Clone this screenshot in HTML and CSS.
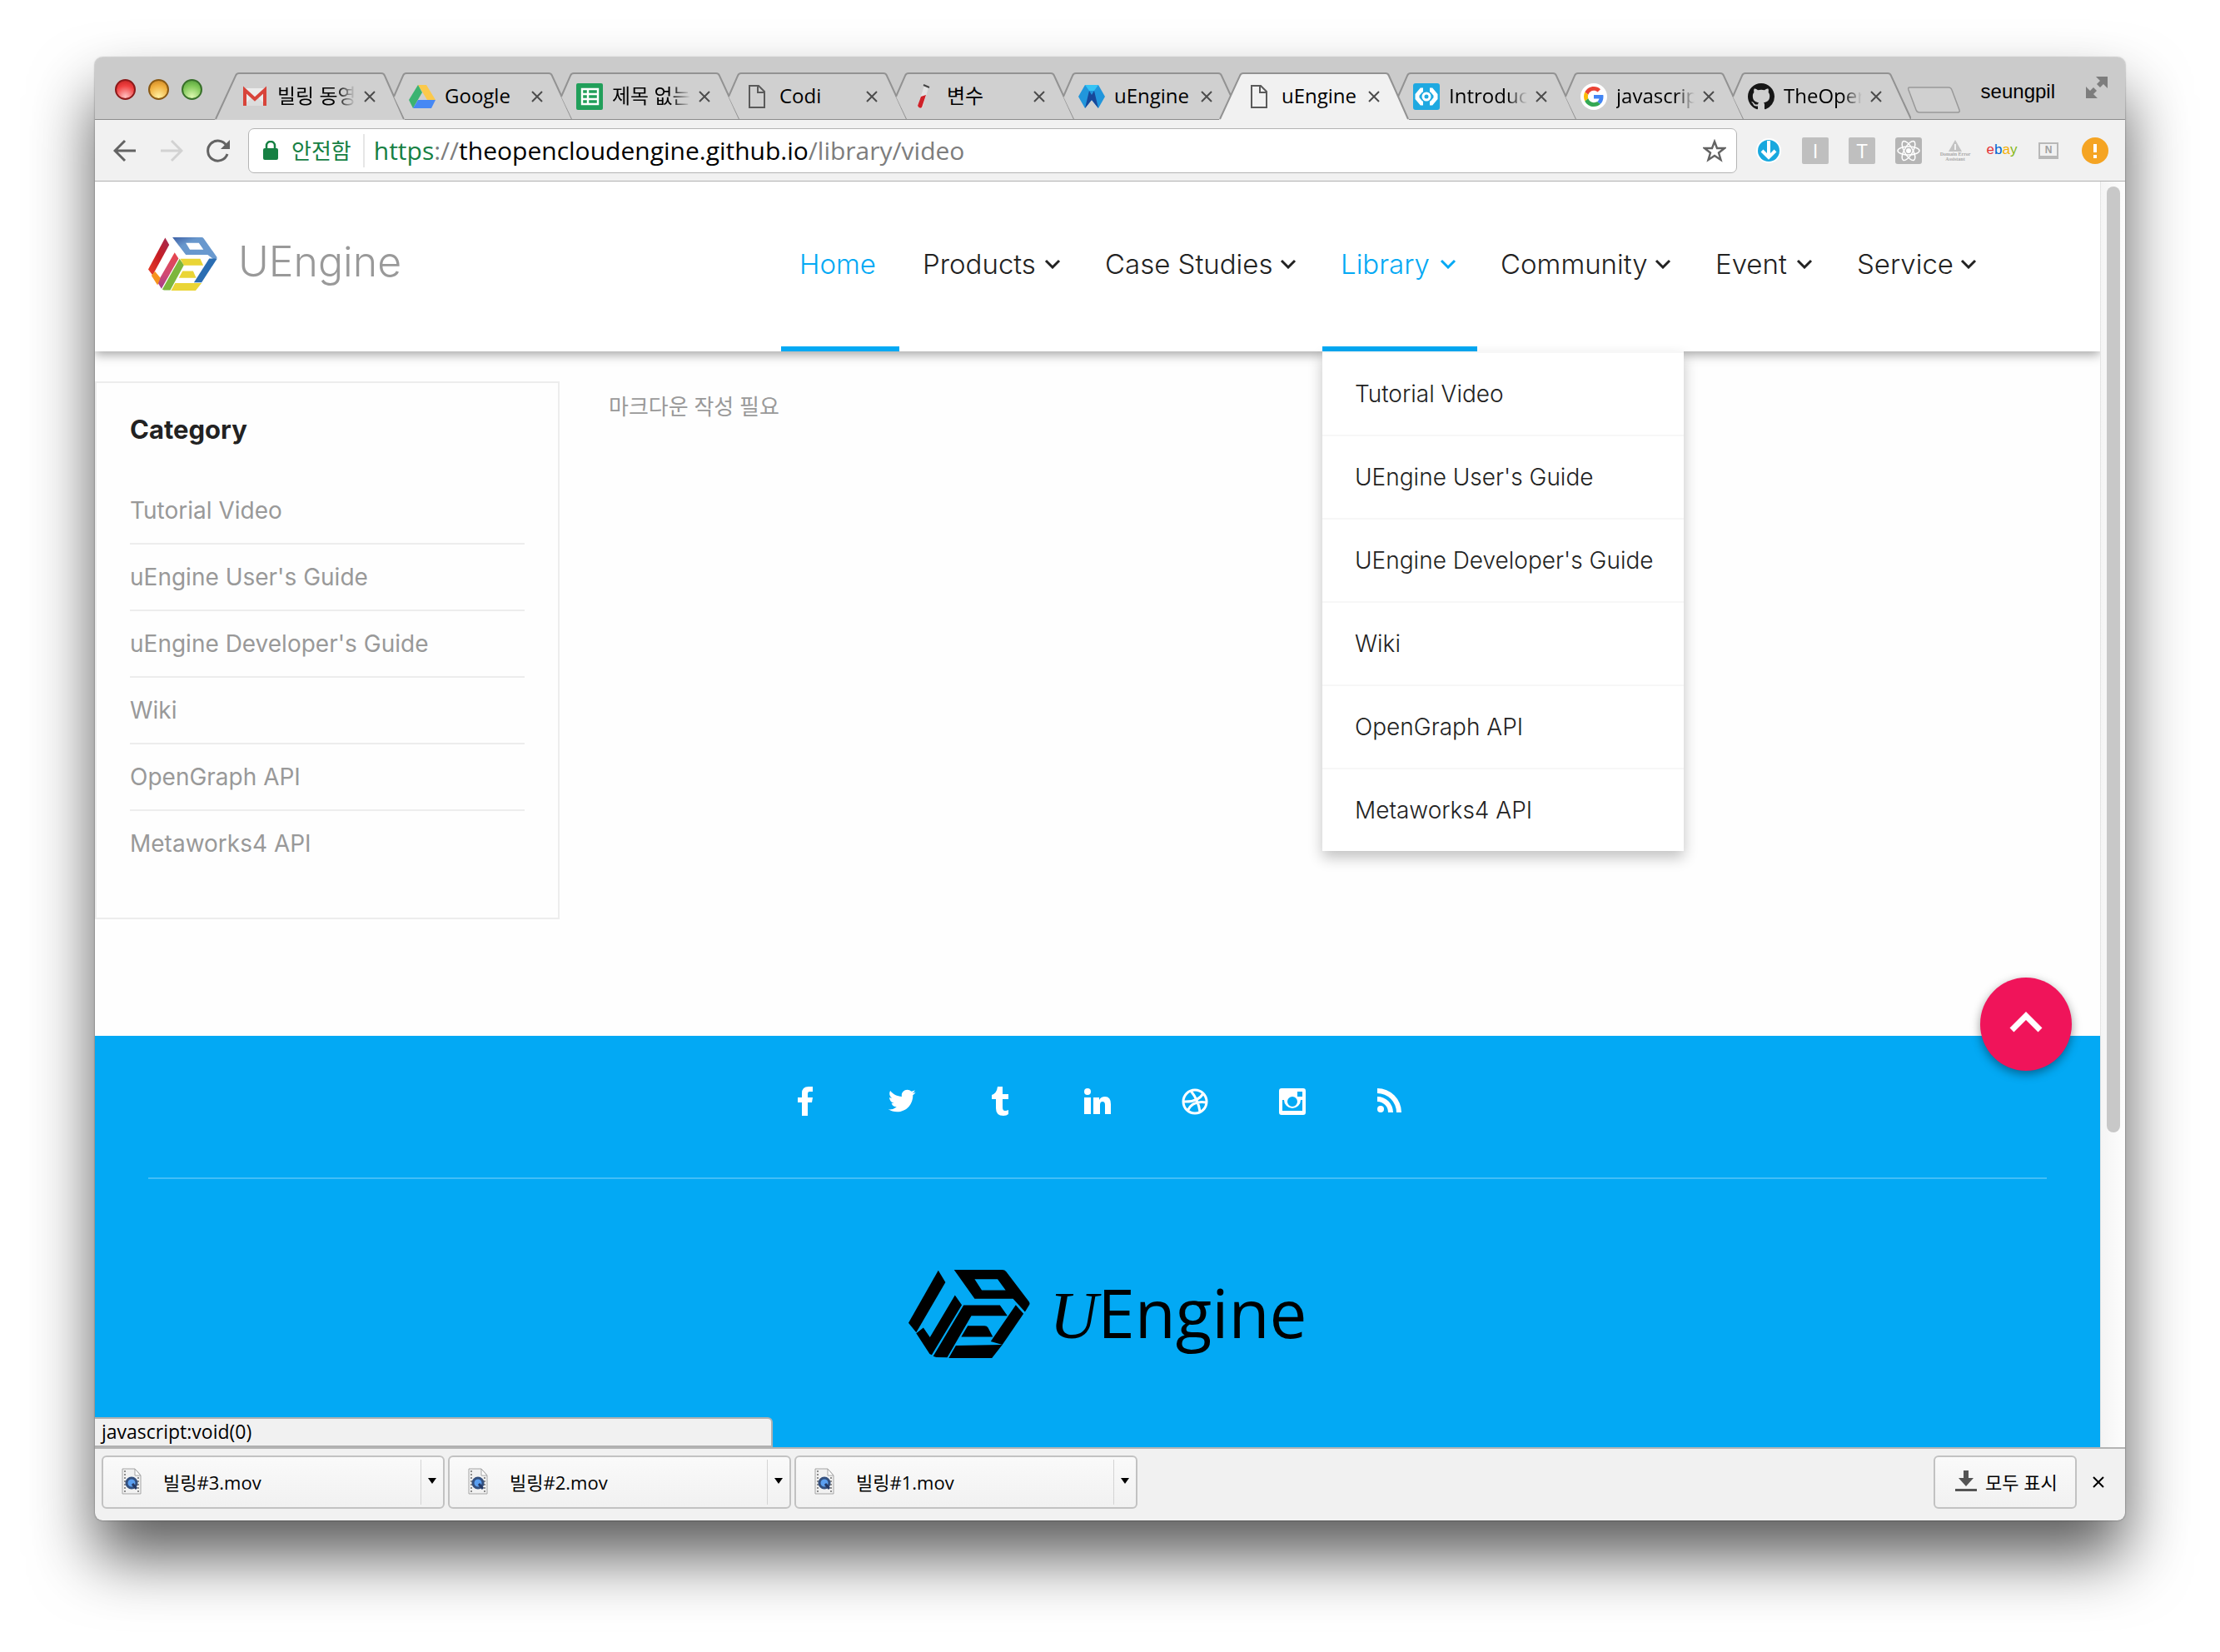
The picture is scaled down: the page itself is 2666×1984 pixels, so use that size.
FILE: index.html
```html
<!DOCTYPE html>
<html lang="ko">
<head>
<meta charset="utf-8">
<meta name="viewport" content="width=device-width, initial-scale=1">
<title>uEngine</title>
<link rel="stylesheet" href="styles.css">
</head>
<body>
<svg class="defs" aria-hidden="true">
  <defs>
    <symbol id="tab-shape" viewBox="0 0 228 57">
      <path class="tab-fill" d="M14 29L27 1H201L228 56H27Z"/>
      <path class="tab-line" d="M14 29L25 4Q26 1 29 1H200Q203 1 204 4L228 56"/>
    </symbol>
    <symbol id="tab-shape-full" viewBox="0 0 228 57">
      <path class="tab-fill" d="M0 57L27 1H201L228 57Z"/>
      <path class="tab-line" d="M1 56L25 4Q26 1 29 1H200Q203 1 204 4L227 56"/>
    </symbol>
    <symbol id="i-close" viewBox="0 0 16 16"><path d="M2 2L14 14M14 2L2 14" fill="none" stroke="currentColor" stroke-width="2"/></symbol>
    <symbol id="i-page" viewBox="0 0 32 32"><path d="M7 3H18L25 10V29H7ZM17 3V11H25" fill="none" stroke="#5a5a5a" stroke-width="2"/></symbol>
    <symbol id="i-down" viewBox="0 0 20 12"><path d="M2 2L10 10L18 2" fill="none" stroke="currentColor" stroke-width="3"/></symbol>
    <symbol id="i-mov" viewBox="0 0 24 32">
      <path d="M1 1H16L23 9V31H1Z" fill="#f1f1f1" stroke="#a5a5a5"/>
      <path d="M16 1V9H23Z" fill="#fff" stroke="#a5a5a5"/>
      <path d="M4 3V30M20 11V30" stroke="#8d8d8d" stroke-width="2" stroke-dasharray="2 2"/>
      <circle cx="12" cy="18" r="6" fill="#5b9ff0" stroke="#34507e" stroke-width="3"/>
      <path d="M13 19L18 25" stroke="#253a66" stroke-width="3"/>
    </symbol>
    <linearGradient id="g-red" x1="1" y1="0" x2="0" y2="1"><stop offset="0" stop-color="#a32a52"/><stop offset=".5" stop-color="#c81d23"/><stop offset="1" stop-color="#e8402a"/></linearGradient>
    <linearGradient id="g-blue" x1="0" y1="0" x2="1" y2="1"><stop offset="0" stop-color="#3d5fa5"/><stop offset=".3" stop-color="#6897cc"/><stop offset="1" stop-color="#6a9ad0"/></linearGradient>
    <linearGradient id="g-pink" x1="0" y1="0" x2="0" y2="1"><stop offset="0" stop-color="#e8464a"/><stop offset=".6" stop-color="#d04a74"/><stop offset="1" stop-color="#a43c8c"/></linearGradient>
  </defs>
</svg>

<div class="window">
  <div class="tabstrip">
    <div class="lights">
      <button class="light red" aria-label="Close"></button>
      <button class="light amber" aria-label="Minimize"></button>
      <button class="light green" aria-label="Zoom"></button>
    </div>
    <div class="tabs">
      <div class="tab"><svg class="tab-bg"><use href="#tab-shape-full"/></svg>
        <svg class="favicon" viewBox="0 0 32 32"><path d="M2 6H30V27H2Z" fill="#ececec"/><path d="M2 27L13 16L16 19L19 16L30 27Z" fill="#dcdcdc"/><path d="M4 27V8L16 19L28 8V27" fill="none" stroke="#d8443a" stroke-width="4"/></svg>
        <span class="tab-title fade">빌링 동영</span><button class="tab-close" aria-label="Close tab"><svg><use href="#i-close"/></svg></button></div>
      <div class="tab"><svg class="tab-bg"><use href="#tab-shape"/></svg>
        <svg class="favicon" viewBox="0 0 32 32"><path d="M11 2H21L32 20H22Z" fill="#fbc94b"/><path d="M11 2L16 11L5 30L0 20Z" fill="#3cb371"/><path d="M11 20H32L27 30H5Z" fill="#4688f4"/></svg>
        <span class="tab-title">Google</span><button class="tab-close" aria-label="Close tab"><svg><use href="#i-close"/></svg></button></div>
      <div class="tab"><svg class="tab-bg"><use href="#tab-shape"/></svg>
        <svg class="favicon" viewBox="0 0 32 32"><rect width="32" height="32" rx="2" fill="#219f5a"/><path d="M7 7H26V25H7ZM7 13H26M7 19H26M14 7V25" fill="none" stroke="#fff" stroke-width="2.400"/></svg>
        <span class="tab-title fade">제목 없는</span><button class="tab-close" aria-label="Close tab"><svg><use href="#i-close"/></svg></button></div>
      <div class="tab"><svg class="tab-bg"><use href="#tab-shape"/></svg>
        <svg class="favicon"><use href="#i-page"/></svg>
        <span class="tab-title">Codi</span><button class="tab-close" aria-label="Close tab"><svg><use href="#i-close"/></svg></button></div>
      <div class="tab"><svg class="tab-bg"><use href="#tab-shape"/></svg>
        <svg class="favicon" viewBox="0 0 32 32"><path d="M16 3L21 5L14 29Q10 32 8 27Z" fill="#e4e4e4"/><path d="M12 16L18 14L13 29Q10 31 8 27Z" fill="#cf2128"/><path d="M15 2L22 5" stroke="#444" stroke-width="2"/></svg>
        <span class="tab-title">변수</span><button class="tab-close" aria-label="Close tab"><svg><use href="#i-close"/></svg></button></div>
      <div class="tab"><svg class="tab-bg"><use href="#tab-shape"/></svg>
        <svg class="favicon" viewBox="0 0 32 32"><path d="M8 2H24L32 16L24 30L16 20L8 30L0 16Z" fill="#2196dc"/><path d="M8 2H24L19 9H13Z" fill="#35c4f5"/><path d="M13 9L16 14L19 9L24 30L16 20L8 30Z" fill="#17489a"/></svg>
        <span class="tab-title">uEngine</span><button class="tab-close" aria-label="Close tab"><svg><use href="#i-close"/></svg></button></div>
      <div class="tab active"><svg class="tab-bg"><use href="#tab-shape-full"/></svg>
        <svg class="favicon"><use href="#i-page"/></svg>
        <span class="tab-title">uEngine</span><button class="tab-close" aria-label="Close tab"><svg><use href="#i-close"/></svg></button></div>
      <div class="tab"><svg class="tab-bg"><use href="#tab-shape"/></svg>
        <svg class="favicon" viewBox="0 0 32 32"><rect width="32" height="32" rx="3" fill="#1fa9e1"/><circle cx="16" cy="16" r="4" fill="none" stroke="#fff" stroke-width="3"/><path d="M12 8L10 8L5 14V18L10 24H12M20 8H22L27 14V18L22 24H20" fill="none" stroke="#fff" stroke-width="5"/></svg>
        <span class="tab-title fade">Introduc</span><button class="tab-close" aria-label="Close tab"><svg><use href="#i-close"/></svg></button></div>
      <div class="tab"><svg class="tab-bg"><use href="#tab-shape"/></svg>
        <svg class="favicon" viewBox="-8 -8 64 64"><circle cx="24" cy="24" r="32" fill="#fff"/><path fill="#EA4335" d="M24 9.500c3.540 0 6.710 1.220 9.210 3.600l6.850-6.850C35.900 2.380 30.470 0 24 0 14.620 0 6.510 5.380 2.560 13.220l7.980 6.190C12.430 13.720 17.740 9.500 24 9.500z"/><path fill="#4285F4" d="M46.980 24.550c0-1.570-.15-3.090-.38-4.550H24v9.020h12.940c-.58 2.960-2.260 5.480-4.780 7.180l7.730 6c4.510-4.180 7.090-10.360 7.090-17.650z"/><path fill="#FBBC05" d="M10.530 28.590c-.48-1.450-.76-2.990-.76-4.590s.27-3.140.76-4.590l-7.980-6.190C.92 16.460 0 20.120 0 24c0 3.880.92 7.540 2.560 10.780l7.970-6.190z"/><path fill="#34A853" d="M24 48c6.480 0 11.930-2.130 15.890-5.810l-7.730-6c-2.150 1.450-4.920 2.300-8.160 2.300-6.260 0-11.570-4.220-13.470-9.910l-7.980 6.190C6.510 42.620 14.620 48 24 48z"/></svg>
        <span class="tab-title fade">javascrip</span><button class="tab-close" aria-label="Close tab"><svg><use href="#i-close"/></svg></button></div>
      <div class="tab"><svg class="tab-bg"><use href="#tab-shape"/></svg>
        <svg class="favicon" viewBox="0 0 16 16"><path fill="#161616" d="M8 0C3.580 0 0 3.580 0 8c0 3.540 2.290 6.530 5.470 7.590.4.070.55-.17.55-.38 0-.19-.01-.82-.01-1.490-2.010.37-2.530-.49-2.690-.94-.09-.23-.48-.94-.82-1.130-.28-.15-.68-.52-.01-.53.63-.01 1.080.58 1.230.82.72 1.210 1.870.87 2.330.66.070-.52.28-.87.51-1.070-1.780-.2-3.640-.89-3.640-3.950 0-.87.31-1.590.82-2.150-.08-.2-.36-1.020.08-2.120 0 0 .67-.21 2.200.82.64-.18 1.320-.27 2-.27s1.360.09 2 .27c1.530-1.040 2.200-.82 2.200-.82.44 1.100.16 1.920.08 2.120.51.56.82 1.270.82 2.150 0 3.070-1.870 3.750-3.650 3.950.29.25.54.73.54 1.480 0 1.070-.01 1.930-.01 2.200 0 .21.15.46.55.38A8.010 8.010 0 0 0 16 8c0-4.420-3.580-8-8-8z"/></svg>
        <span class="tab-title fade">TheOper</span><button class="tab-close" aria-label="Close tab"><svg><use href="#i-close"/></svg></button></div>
      <button class="new-tab" aria-label="New tab"><svg viewBox="0 0 66 34"><path d="M3 2H50Q53 2 54 5L63 29Q64 32 61 32H15Q12 32 11 29L2 5Q1 2 3 2Z" fill="#d0d0d0" stroke="#999" stroke-width="1.500"/></svg></button>
    </div>
    <button class="profile">seungpil</button>
    <button class="expand" aria-label="Full screen"><svg viewBox="0 0 28 28"><path d="M13 1H27V15L22 10L18 14L14 10L18 6ZM1 13L6 18L10 14L14 18L10 22L15 27H1Z" fill="#7d7d7d"/></svg></button>
  </div>

  <div class="toolbar">
    <button class="tool" aria-label="Back"><svg viewBox="0 0 28 28"><path d="M27 14H3M14 2L2 14L14 26" fill="none" stroke="#636363" stroke-width="3"/></svg></button>
    <button class="tool" aria-label="Forward"><svg viewBox="0 0 28 28"><path d="M1 14H25M14 2L26 14L14 26" fill="none" stroke="#d2d2d2" stroke-width="3"/></svg></button>
    <button class="tool" aria-label="Reload"><svg viewBox="0 0 28 28"><path d="M24 8A12 12 0 1 0 25 18" fill="none" stroke="#636363" stroke-width="3"/><path d="M28 1V12H17Z" fill="#636363"/></svg></button>
    <div class="omnibox">
      <svg class="lock" viewBox="0 0 18 24"><rect y="9" width="18" height="14" rx="2" fill="#168043"/><path d="M4 10V6A5 5 0 0 1 14 6V10" fill="none" stroke="#168043" stroke-width="2.500"/></svg>
      <span class="secure">안전함</span>
      <div class="url" role="textbox" aria-label="Address"><span class="scheme">https</span>://<span class="host">theopencloudengine.github.io</span>/library/video</div>
      <button class="star" aria-label="Bookmark"><svg viewBox="0 0 28 28"><path d="M14 3L17 11H26L19 16.500L21.500 25L14 20L6.500 25L9 16.500L2 11H11Z" fill="none" stroke="#636363" stroke-width="2.400"/></svg></button>
    </div>
    <div class="extensions">
      <svg viewBox="0 0 32 32"><circle cx="16" cy="16" r="15" fill="#fff"/><circle cx="16" cy="16" r="13" fill="#18a8de"/><path d="M16 4V24M8 16L16 24L24 16" fill="none" stroke="#fff" stroke-width="4"/></svg>
      <span class="letter">I</span>
      <span class="letter">T</span>
      <svg viewBox="0 0 32 32"><rect width="32" height="32" rx="3" fill="#b5b5b5"/><g fill="none" stroke="#fff" stroke-width="1.500"><ellipse cx="16" cy="16" rx="13" ry="5"/><ellipse cx="16" cy="16" rx="13" ry="5" transform="rotate(60 16 16)"/><ellipse cx="16" cy="16" rx="13" ry="5" transform="rotate(120 16 16)"/></g><circle cx="16" cy="16" r="3" fill="#fff"/></svg>
      <span class="warn"><svg viewBox="0 0 16 14"><path d="M8 0L16 14H0Z" fill="#c3c3c3"/><path d="M8 5V12" stroke="#fff" stroke-width="1.500"/></svg><small>Domain Error Assistant</small></span>
      <span class="ebay"><span class="e">e</span><span class="b">b</span><span class="a">a</span><span class="y">y</span></span>
      <span class="note">N</span>
      <svg viewBox="0 0 32 32"><circle cx="16" cy="16" r="16" fill="#f5a423"/><path d="M16 8V18M16 21V25" stroke="#fff" stroke-width="4"/></svg>
    </div>
  </div>

  <div class="viewport">
    <div class="page">
      <header class="site-header">
        <a class="brand" href="#">
          <svg class="brand-mark" viewBox="115 105 408 317" preserveAspectRatio="none">
            <path d="M215 107L239 150L141 330L115 296Z" fill="url(#g-red)"/>
            <path d="M258 105H430Q438 105 443 112L522 225L506 240L466 209H337ZM337 139L361 178H441L414 139Z" fill="url(#g-blue)" fill-rule="evenodd"/>
            <path d="M475 231H522L430 374H385Z" fill="#2a6db2"/>
            <path d="M271 196L294 231L193 411L170 372Z" fill="url(#g-pink)"/>
            <path d="M134 333L155 308L187 347L170 390Z" fill="#f7941d"/>
            <path d="M300 232L326 270L245 420H208L198 415Z" fill="#7cb63c"/>
            <path d="M304 232H422L440 272H326ZM318 306H380L398 346H296ZM274 377H430L395 422H250Z" fill="#ead536"/>
          </svg>
          <span class="brand-name">UEngine</span>
        </a>
        <nav class="nav" aria-label="Main">
          <ul>
            <li class="on"><a href="#">Home</a></li>
            <li><a href="#">Products<svg><use href="#i-down"/></svg></a></li>
            <li><a href="#">Case Studies<svg><use href="#i-down"/></svg></a></li>
            <li class="on"><a href="#">Library<svg><use href="#i-down"/></svg></a>
              <ul class="menu">
                <li><a href="#">Tutorial Video</a></li>
                <li><a href="#">UEngine User's Guide</a></li>
                <li><a href="#">UEngine Developer's Guide</a></li>
                <li><a href="#">Wiki</a></li>
                <li><a href="#">OpenGraph API</a></li>
                <li><a href="#">Metaworks4 API</a></li>
              </ul>
            </li>
            <li><a href="#">Community<svg><use href="#i-down"/></svg></a></li>
            <li><a href="#">Event<svg><use href="#i-down"/></svg></a></li>
            <li><a href="#">Service<svg><use href="#i-down"/></svg></a></li>
          </ul>
        </nav>
      </header>

      <main class="content">
        <aside class="sidebar">
          <h2>Category</h2>
          <ul>
            <li><a href="#">Tutorial Video</a></li>
            <li><a href="#">uEngine User's Guide</a></li>
            <li><a href="#">uEngine Developer's Guide</a></li>
            <li><a href="#">Wiki</a></li>
            <li><a href="#">OpenGraph API</a></li>
            <li><a href="#">Metaworks4 API</a></li>
          </ul>
        </aside>
        <p class="article">마크다운 작성 필요</p>
      </main>

      <footer class="site-footer">
        <div class="social">
          <a href="#" aria-label="Facebook"><svg viewBox="0 0 36 36"><path d="M27 1V7H23Q21 7 21 10V14H27L26 20H21V36H14V20H9V14H14V9Q14 1 22 1Z"/></svg></a>
          <a href="#" aria-label="Twitter"><svg viewBox="1 1 23 23"><path d="M22.460 6c-.77.35-1.600.58-2.460.69.88-.53 1.560-1.370 1.880-2.380-.83.5-1.750.85-2.720 1.050C18.370 4.500 17.260 4 16 4c-2.350 0-4.270 1.920-4.270 4.290 0 .34.04.67.11.98C8.280 9.090 5.110 7.380 3 4.790c-.37.63-.58 1.370-.58 2.150 0 1.490.75 2.810 1.910 3.560-.71 0-1.370-.2-1.950-.5v.03c0 2.080 1.480 3.820 3.440 4.210a4.220 4.220 0 0 1-1.930.07 4.280 4.280 0 0 0 4 2.980 8.521 8.521 0 0 1-5.330 1.840c-.34 0-.68-.02-1.020-.06C3.440 20.290 5.700 21 8.120 21 16 21 20.330 14.460 20.330 8.790c0-.19 0-.37-.01-.56.84-.6 1.560-1.360 2.140-2.230z"/></svg></a>
          <a href="#" aria-label="Tumblr"><svg viewBox="0 0 36 36"><path d="M15 1H21V10H28V16H21V26Q21 30 24 30Q26 30 28 29V34Q26 36 22 36Q13 36 13 27V16H8V11Q14 9 15 1Z"/></svg></a>
          <a href="#" aria-label="LinkedIn"><svg viewBox="0 0 36 36"><circle cx="6" cy="7" r="4"/><path d="M2 14H10V34H2ZM13 14H20V17Q22 13 27 13Q34 13 34 22V34H27V23Q27 19 24 19Q21 19 21 23V34H13Z"/></svg></a>
          <a href="#" aria-label="Dribbble"><svg viewBox="0 0 36 36"><g fill="none" stroke="#fff" stroke-width="3"><circle cx="18" cy="19" r="14"/><path d="M13 6Q22 17 24 31M4 19Q22 20 28 9M9 30Q15 17 32 20"/></g></svg></a>
          <a href="#" aria-label="Instagram"><svg viewBox="0 0 36 36"><path fill-rule="evenodd" d="M5 3H31Q34 3 34 6V32Q34 35 31 35H5Q2 35 2 32V6Q2 3 5 3ZM24 7V13H30V7ZM6 17V30H30V17H28A10 10 0 1 1 8 17ZM18 13A6 6 0 1 0 18 25A6 6 0 1 0 18 13Z"/></svg></a>
          <a href="#" aria-label="RSS"><svg viewBox="0 0 36 36"><circle cx="7" cy="28" r="4"/><path d="M3 3A29 29 0 0 1 32 32H26A23 23 0 0 0 3 9ZM3 13A19 19 0 0 1 22 32H16A13 13 0 0 0 3 19Z"/></svg></a>
        </div>
        <div class="footer-brand">
          <svg viewBox="115 105 408 317" preserveAspectRatio="none">
            <path d="M215 107L239 150L141 330L115 296Z"/>
            <path d="M268 105H430Q438 105 443 112L520 220Q523 225 521 230L506 256L466 209H337ZM337 139L361 178H441L414 139Z" fill-rule="evenodd"/>
            <path d="M475 231L501 263L430 374L391 362Z"/>
            <path d="M271 196L294 231L193 411L186 407L141 333L165 313L187 347Z"/>
            <path d="M300 232H422L447 270H326L245 420L208 419L198 415Z"/>
            <path d="M314 306H370Q378 306 382 313L398 346H292ZM274 377L430 374L395 422H250Z"/>
          </svg>
          <span class="wordmark"><i>U</i>Engine</span>
        </div>
      </footer>
      <button class="to-top" aria-label="Back to top"><svg viewBox="0 0 40 26"><path d="M3 22L20 5L37 22" fill="none" stroke="#fff" stroke-width="7"/></svg></button>
      <div class="status">javascript:void(0)</div>
    </div>
    <div class="scrollbar"><div class="thumb"></div></div>
  </div>

  <div class="downloads">
    <div class="download"><button class="file"><svg><use href="#i-mov"/></svg>빌링#3.mov</button><button class="more" aria-label="Options"></button></div>
    <div class="download"><button class="file"><svg><use href="#i-mov"/></svg>빌링#2.mov</button><button class="more" aria-label="Options"></button></div>
    <div class="download"><button class="file"><svg><use href="#i-mov"/></svg>빌링#1.mov</button><button class="more" aria-label="Options"></button></div>
    <button class="show-all"><svg viewBox="0 0 28 28"><path d="M11 1H17V10H23L14 20L5 10H11ZM1 23H27V26H1Z" fill="#555"/></svg>모두 표시</button>
    <button class="bar-close" aria-label="Close"><svg><use href="#i-close"/></svg></button>
  </div>
</div>
</body>
</html>
```
FILE: styles.css
```css
* { box-sizing: border-box; }

body {
  margin: 0;
  padding: 69px 114px 158px;
  background: #fff;
  color: #000;
  font-family: "Open Sans", "Noto Sans CJK KR", sans-serif;
  font-size: 24px;
}

ul, h2, p { margin: 0; padding: 0; }
ul { list-style: none; }
a { color: inherit; text-decoration: none; }
button { margin: 0; padding: 0; border: 0; background: none; color: inherit; font: inherit; }
svg { display: block; flex: none; }
.defs { position: absolute; width: 0; height: 0; }

.window {
  display: flex;
  flex-direction: column;
  border-radius: 9px;
  background: #f1f1f1;
  box-shadow: 0 0 2px rgba(0, 0, 0, .5), 0 44px 76px rgba(0, 0, 0, .64);
}

/* Tab strip */
.tabstrip {
  display: flex;
  height: 75px;
  border-radius: 9px 9px 0 0;
  background: linear-gradient(#8c8c8c, #8c8c8c) bottom / 100% 1px no-repeat, #cbcbcb;
}
.lights { display: flex; gap: 15px; width: 144px; padding: 26px 0 0 24px; }
.light { width: 25px; height: 25px; border-radius: 50%; border: 2px solid; }
.red { background: radial-gradient(circle at 50% 90%, #ffc0c0, #f04040 60%, #c02020); border-color: #8c1a1a; }
.amber { background: radial-gradient(circle at 50% 90%, #fff0a0, #f0b040 60%, #c88020); border-color: #8a5a14; }
.green { background: radial-gradient(circle at 50% 90%, #dcf8b0, #80c858 60%, #509838); border-color: #38702a; }

.tabs { display: flex; flex: 1; padding-top: 18px; }
.tab {
  --tab-color: #d0d0d0;
  position: relative;
  display: flex;
  align-items: center;
  width: 228px;
  height: 57px;
  padding: 0 32px;
}
.tab + .tab { margin-left: -27px; }
.tab.active { --tab-color: #f1f1f1; z-index: 1; }
.tab-bg { position: absolute; inset: 0; width: 228px; height: 57px; }
.tab-fill { fill: var(--tab-color); }
.tab-line { fill: none; stroke: #929292; stroke-width: 2px; }
.favicon { position: relative; width: 32px; height: 32px; }
.tab-title {
  position: relative;
  width: 94px;
  margin-left: 11px;
  padding-bottom: 2px;
  white-space: nowrap;
  line-height: 34px;
}
.tab-title.fade {
  -webkit-mask-image: linear-gradient(90deg, #000 75%, transparent);
  mask-image: linear-gradient(90deg, #000 75%, transparent);
}
.tab-close { position: relative; margin-left: 9px; color: #4c4c4c; }
.tab-close svg, .bar-close svg { width: 16px; height: 16px; }
.new-tab { width: 66px; height: 34px; margin-top: 16px; margin-left: -5px; }
.new-tab svg { width: 66px; height: 34px; }
.profile { height: 32px; margin: 25px 36px 0 0; font-family: "Liberation Sans", sans-serif; line-height: 32px; }
.expand { width: 28px; height: 28px; margin: 22px 20px 0 0; }
.expand svg { width: 28px; }

/* Toolbar */
.toolbar {
  display: flex;
  align-items: center;
  gap: 28px;
  height: 74px;
  padding: 0 20px 0 22px;
  border-bottom: 1px solid #b0b0b0;
  background: #f1f1f1;
}
.tool, .tool svg, .star svg { width: 28px; height: 28px; }
.omnibox {
  display: flex;
  align-items: center;
  flex: 1;
  height: 54px;
  margin-left: -6px;
  padding: 0 12px 0 17px;
  border: 1px solid #b4b4b4;
  border-radius: 7px;
  background: #fff;
  font-size: 30px;
}
.lock { width: 18px; height: 24px; }
.secure { margin-left: 16px; padding-right: 14px; border-right: 2px solid #e6e6e6; color: #168043; font-size: 26px; line-height: 40px; }
.url { flex: 1; margin-left: 11px; color: #7d7d7d; white-space: nowrap; line-height: 40px; }
.scheme { color: #168043; }
.host { color: #000; }
.extensions { display: flex; gap: 24px; margin-left: -6px; }
.extensions > * { width: 32px; height: 32px; }
.letter { border-radius: 2px; background: #bfbfbf; color: #fff; text-align: center; font: 24px/32px "Open Sans", sans-serif; }
.warn { display: flex; flex-direction: column; align-items: center; padding-top: 3px; }
.warn svg { width: 16px; height: 14px; }
.warn small { width: 40px; color: #a8a8a8; font: bold 6px/6px "Liberation Serif", serif; text-align: center; }
.ebay { display: flex; justify-content: center; font: 17px/30px "Liberation Sans", sans-serif; }
.e { color: #e53238; }
.b { color: #0064d2; }
.a { color: #f5af02; }
.y { color: #86b817; }
.note { border: 2px solid #b8b8b8; border-bottom-width: 4px; color: #a0a0a0; text-align: center; font: bold 12px/14px "Liberation Sans", sans-serif; }
.extensions .note { width: 24px; height: 20px; margin: 6px 4px; }

/* Viewport */
.viewport { display: flex; }
.page { position: relative; flex: 1; background: #fefefe; overflow: hidden; }
.scrollbar { width: 30px; padding: 6px 6px 0 7px; border-left: 1px solid #e4e4e4; background: linear-gradient(90deg, #f4f4f4, #fdfdfd); }
.thumb { height: 1136px; border-radius: 8px; background: #c8c8c8; }

.site-header {
  position: relative;
  z-index: 1;
  display: flex;
  justify-content: space-between;
  height: 204px;
  padding: 0 123px 0 64px;
  background: #fff;
  box-shadow: 0 4px 12px rgba(0, 0, 0, .35);
}
.brand { display: flex; align-items: center; gap: 25px; padding-bottom: 6px; color: #999; font: 300 50px/60px Inter, sans-serif; }
.brand-mark { width: 83px; height: 64px; }
.brand-name { padding-bottom: 6px; }
.nav > ul { display: grid; grid-template-columns: 142px 213px 277px 186px 252px 164px 191px; gap: 6px; }
.nav > ul > li { position: relative; height: 204px; }
.nav > ul > li > a {
  display: flex;
  align-items: center;
  justify-content: space-between;
  height: 204px;
  padding: 0 25px 0 22px;
  border-bottom: 6px solid transparent;
  color: #222;
  font: 300 33px/40px Inter, sans-serif;
  white-space: nowrap;
}
.nav > ul > li.on > a { border-color: #03a9f4; color: #03a9f4; }
.nav a svg { width: 20px; height: 12px; }
.menu {
  position: absolute;
  top: 100%;
  left: 0;
  width: 434px;
  background: #fff;
  box-shadow: 0 8px 16px rgba(0, 0, 0, .24);
}
.menu a { display: block; height: 100px; padding: 0 39px; border-top: 2px solid #f7f7f7; color: #222; font: 300 28px/98px Inter, sans-serif; white-space: nowrap; }

.content { display: grid; grid-template-columns: 558px 1fr; gap: 59px; padding: 36px 0 140px; }
.sidebar { padding: 36px 40px 48px; border: 2px solid #ededed; }
.sidebar h2 { margin-bottom: 38px; color: #222; font: 700 31px/40px Inter, sans-serif; }
.sidebar a { display: block; height: 80px; border-bottom: 2px solid #ededed; color: #999; font: 28px/78px Inter, sans-serif; }
.sidebar li:last-child a { border-bottom: 0; }
.article { padding-top: 10px; color: #999; font-size: 26px; line-height: 40px; }

.site-footer { padding: 0 64px; background: #03a9f4; }
.social { display: flex; justify-content: center; gap: 81px; padding: 60px 0 74px; border-bottom: 2px solid rgba(255, 255, 255, .25); }
.social svg { width: 36px; height: 36px; fill: #fff; }
.footer-brand { display: flex; align-items: center; justify-content: center; gap: 24px; height: 322px; padding: 2px 0 0 24px; }
.footer-brand svg { width: 146px; height: 106px; }
.wordmark { font-size: 80px; line-height: 106px; }
.wordmark i { font-family: "Liberation Serif", serif; }

.to-top {
  position: absolute;
  top: 956px;
  right: 34px;
  z-index: 2;
  display: flex;
  align-items: center;
  justify-content: center;
  width: 110px;
  height: 112px;
  padding-bottom: 4px;
  border-radius: 50%;
  background: #f0145a;
  box-shadow: 0 4px 12px rgba(0, 0, 0, .4);
}
.to-top svg { width: 40px; height: 26px; }
.status {
  position: absolute;
  bottom: 0;
  left: 0;
  width: 814px;
  height: 36px;
  padding-left: 8px;
  border: 2px solid #b0b0b0;
  border-left: 0;
  border-radius: 0 6px 0 0;
  background: #f1f1f1;
  font-size: 23px;
  line-height: 30px;
}

/* Downloads */
.downloads { display: flex; gap: 4px; height: 88px; padding: 8px 24px 0 8px; border-top: 2px solid #b4b4b4; }
.download, .show-all { height: 64px; padding-bottom: 2px; border: 2px solid #c2c2c2; border-radius: 6px; background: linear-gradient(#fafafa, #f1f1f1); font-size: 22px; }
.download { display: flex; width: 412px; }
.file { display: flex; align-items: center; flex: 1; gap: 26px; padding-left: 22px; }
.file svg { width: 24px; height: 32px; }
.more { display: flex; justify-content: center; width: 27px; margin: 3px 0 1px; padding-top: 22px; border-left: 1px solid #d4d4d4; }
.more::before { content: ""; border: 5px solid transparent; border-top: 7px solid #000; border-bottom: 0; }
.show-all { display: flex; align-items: center; gap: 9px; width: 172px; margin-left: auto; padding-left: 23px; }
.show-all svg { width: 28px; height: 28px; }
.bar-close { height: 64px; margin-left: 14px; }
```
